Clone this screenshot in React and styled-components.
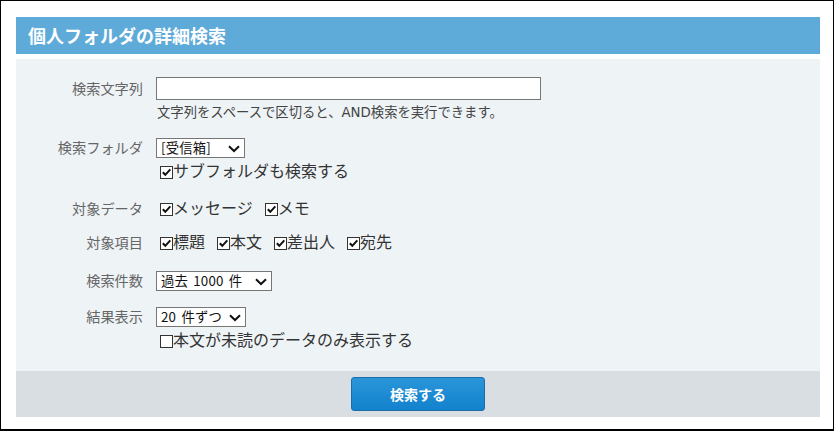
import React from "react";
import styled, { createGlobalStyle } from "styled-components";

const Global = createGlobalStyle`
  html, body { margin: 0; padding: 0; background: #fff; }
  body { font-family: "DejaVu Sans", "Noto Sans CJK JP", sans-serif; }
  * { box-sizing: border-box; }
`;

const Frame = styled.div`
  width: 834px;
  height: 431px;
  border: 1px solid #000;
  border-bottom-width: 2px;
  padding: 16px 13px 12px 15px;
  background: #fff;
`;

const Panel = styled.section`
  display: flex;
  flex-direction: column;
  width: 804px;
`;

const Header = styled.h1`
  margin: 0 0 5px 0;
  height: 37px;
  background: #5eaad9;
  color: #fff;
  font-family: "Noto Sans CJK JP", sans-serif;
  font-size: 18px;
  font-weight: 700;
  line-height: 37px;
  padding-left: 12px;
`;

const Body = styled.div`
  background: #eef3f6;
  padding: 0 0 20px 0;
  display: flex;
  flex-direction: column;
`;

const Row = styled.div`
  display: flex;
  flex-direction: column;
  margin-top: ${(p) => p.$mt}px;
`;

const Line = styled.div`
  display: flex;
  align-items: center;
`;

const Label = styled.div`
  width: 127px;
  margin-right: 13px;
  text-align: right;
  font-size: 14.2px;
  line-height: 20px;
  color: #666;
  white-space: nowrap;
`;

const TextInput = styled.input`
  width: 385px;
  height: 23px;
  border: 1px solid #767676;
  background: #fff;
  padding: 0 4px;
  font: inherit;
  outline: none;
`;

const Hint = styled.div`
  margin-top: 4px;
  padding-left: 141px;
  font-size: 13.33px;
  line-height: 18px;
  color: #444;
`;

const SubLine = styled.div`
  margin-top: 4px;
  padding-left: 140px;
  display: flex;
`;

const SelectBox = styled.div`
  position: relative;
  width: ${(p) => p.$w}px;
  height: 20px;
  border: 1px solid #767676;
  background: #fff;
  font-family: "Noto Sans CJK JP", sans-serif;
  font-size: 13.33px;
  line-height: 18px;
  letter-spacing: 0.2px;
  word-spacing: 2px;
  color: #111;
  padding-left: 4px;
  display: flex;
  align-items: center;
  white-space: pre;
  svg {
    position: absolute;
    right: 4px;
    top: 6px;
  }
`;

const Items = styled.div`
  display: flex;
  gap: 8px;
`;

const Item = styled.label`
  display: inline-flex;
  align-items: center;
  font-size: 16px;
  line-height: 20px;
  color: #333;
`;

const Box = styled.span`
  width: 13px;
  height: 13px;
  border: 1px solid #333;
  background: #fff;
  margin: 0 0 0 4px;
  display: inline-flex;
  align-items: center;
  justify-content: center;
`;

const Footer = styled.div`
  height: 46px;
  background: #d9dee2;
  display: flex;
  align-items: center;
  justify-content: center;
`;

const Button = styled.button`
  width: 134px;
  height: 34px;
  border: 1px solid #1a6ea9;
  border-radius: 3px;
  background: linear-gradient(#2a95d9, #1282cd);
  color: #fff;
  font-family: "Noto Sans CJK JP", sans-serif;
  font-size: 14px;
  font-weight: 700;
  cursor: pointer;
`;

const Chevron = () => (
  <svg width="12" height="8" viewBox="0 0 12 8">
    <path d="M1 1.2 L6 6 L11 1.2" stroke="#111" strokeWidth="2" fill="none" />
  </svg>
);

const Select = ({ w, children }) => (
  <SelectBox $w={w}>
    {children}
    <Chevron />
  </SelectBox>
);

const Check = ({ checked = true, children }) => (
  <Item>
    <Box>
      {checked && (
        <svg width="11" height="11" viewBox="0 0 11 11">
          <path d="M1.8 5.2 L4.3 7.8 L9.3 2.3" stroke="#111" strokeWidth="2" fill="none" />
        </svg>
      )}
    </Box>
    {children}
  </Item>
);

export default function App() {
  return (
    <>
      <Global />
      <Frame>
        <Panel>
          <Header>個人フォルダの詳細検索</Header>
          <Body>
            <Row $mt={18}>
              <Line>
                <Label>検索文字列</Label>
                <TextInput type="text" />
              </Line>
              <Hint>文字列をスペースで区切ると、AND検索を実行できます。</Hint>
            </Row>
            <Row $mt={16}>
              <Line>
                <Label>検索フォルダ</Label>
                <Select w={89}>[受信箱]</Select>
              </Line>
              <SubLine>
                <Check>サブフォルダも検索する</Check>
              </SubLine>
            </Row>
            <Row $mt={17}>
              <Line>
                <Label>対象データ</Label>
                <Items>
                  <Check>メッセージ</Check>
                  <Check>メモ</Check>
                </Items>
              </Line>
            </Row>
            <Row $mt={14}>
              <Line>
                <Label>対象項目</Label>
                <Items>
                  <Check>標題</Check>
                  <Check>本文</Check>
                  <Check>差出人</Check>
                  <Check>宛先</Check>
                </Items>
              </Line>
            </Row>
            <Row $mt={18}>
              <Line>
                <Label>検索件数</Label>
                <Select w={116}>過去 1000 件</Select>
              </Line>
            </Row>
            <Row $mt={16}>
              <Line>
                <Label>結果表示</Label>
                <Select w={90}>20 件ずつ</Select>
              </Line>
              <SubLine>
                <Check checked={false}>本文が未読のデータのみ表示する</Check>
              </SubLine>
            </Row>
          </Body>
          <Footer>
            <Button>検索する</Button>
          </Footer>
        </Panel>
      </Frame>
    </>
  );
}
